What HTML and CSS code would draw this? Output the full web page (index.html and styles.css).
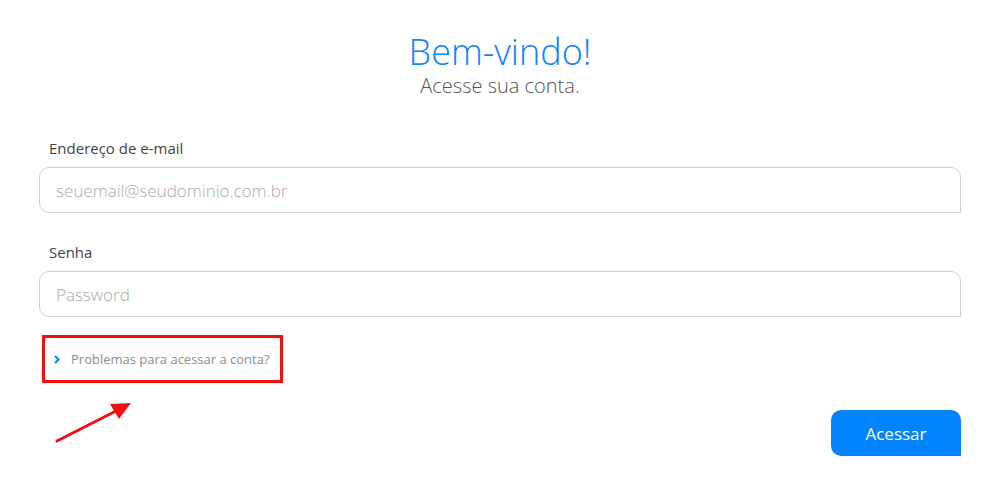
FILE: index.html
```html
<!DOCTYPE html>
<html>
<head>
  <title>Bem-vindo</title>
  <link rel="stylesheet" href="styles.css">
</head>
<body>
  <div class="login">
    <div class="header">
      <h1>Bem-vindo!</h1>
      <p>Acesse sua conta.</p>
    </div>

    <form class="form">
      <div class="field">
        <label for="email">Endereço de e-mail</label>
        <input id="email" type="text" placeholder="seuemail@seudominio.com.br">
      </div>
      <div class="field">
        <label for="senha">Senha</label>
        <input id="senha" type="password" placeholder="Password">
      </div>

      <div class="help">
        <a href="#" class="help-link">
          <svg class="chevron" width="6" height="9" viewBox="0 0 6 9"><polyline points="1,1 4.5,4.5 1,8" fill="none" stroke="#0a84ff" stroke-width="2"/></svg>
          Problemas para acessar a conta?
        </a>
        <svg class="arrow" width="90" height="50" viewBox="0 0 90 50">
          <line x1="3" y1="46" x2="62" y2="16" stroke="#f01010" stroke-width="3" stroke-linecap="round"/>
          <polygon points="77,8 56,9 65,24" fill="#f01010"/>
        </svg>
      </div>

      <div class="actions">
        <button type="button" class="btn">Acessar</button>
      </div>
    </form>
  </div>
</body>
</html>
```

FILE: styles.css
```css
body {
  margin: 0;
  font-family: 'Open Sans', sans-serif;
  background-color: #fff;
}
.login {
  padding: 0 39px;
}
.header {
  text-align: center;
  padding-top: 29px;
}
.header h1 {
  margin: 0;
  font-size: 36px;
  font-weight: 300;
  color: #0a84ff;
  line-height: 46px;
}
.header p {
  margin: 0;
  font-size: 20px;
  font-weight: 300;
  color: #555;
  line-height: 22px;
}
.form {
  margin-top: 41px;
}
.field {
  margin-bottom: 29px;
}
.field label {
  display: block;
  padding-left: 10px;
  font-size: 15px;
  color: #444;
  line-height: 20px;
  margin-bottom: 9px;
}
.field input {
  display: block;
  box-sizing: border-box;
  width: 100%;
  height: 46px;
  border: 1px solid #cfcfcf;
  border-radius: 10px 10px 0 10px;
  padding: 0 16px;
  font-family: inherit;
  font-size: 17px;
  color: #333;
  outline: none;
}
.field input::placeholder {
  color: #aaa;
  font-weight: 300;
}
.help {
  position: relative;
  margin-top: -11px;
  margin-left: 3px;
}
.help-link {
  display: inline-flex;
  align-items: center;
  box-sizing: border-box;
  width: 241px;
  height: 48px;
  border: 3px solid #f01010;
  padding-left: 9px;
  font-size: 13px;
  color: #8d8d8d;
  text-decoration: none;
}
.chevron {
  margin-right: 11px;
}
.arrow {
  position: absolute;
  left: 12px;
  top: 60px;
}
.actions {
  display: flex;
  justify-content: flex-end;
  margin-top: 27px;
}
.btn {
  width: 130px;
  height: 46px;
  border: none;
  border-radius: 10px 10px 0 10px;
  background-color: #0284fe;
  color: #fff;
  font-family: inherit;
  font-size: 17px;
  cursor: pointer;
}
```
